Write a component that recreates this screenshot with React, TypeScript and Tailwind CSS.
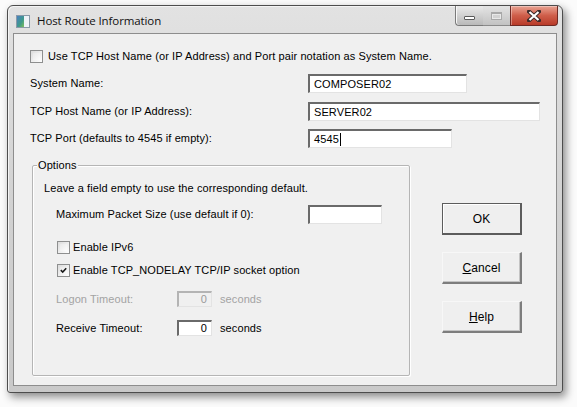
import React from 'react';

const font = "font-['Liberation_Sans',Arial,sans-serif]";

const CheckBox: React.FC<{ checked?: boolean }> = ({ checked }) => (
  <div className="w-[13px] h-[13px] shrink-0 border border-[#8e8f8f] bg-gradient-to-br from-[#dcdcdc] to-white p-[2px]">
    <div className="w-full h-full bg-gradient-to-br from-[#e9e9e9] to-[#fcfcfc] flex items-center justify-center">
      {checked && (
        <svg width="9" height="9" viewBox="0 0 9 9">
          <path d="M1 4 L3.5 6.5 L8 1.5" fill="none" stroke="#1a1a1a" strokeWidth="2" />
        </svg>
      )}
    </div>
  </div>
);

const TextBox: React.FC<{ value?: string; w: string; h?: string; right?: boolean; disabled?: boolean; caret?: boolean }> = ({
  value,
  w,
  h = 'h-[19px]',
  right,
  disabled,
  caret,
}) => (
  <div
    className={`${w} ${h} flex items-center border-t-2 border-l-2 border-b border-r ${
      disabled ? 'border-t-[#b4b4b4] border-l-[#b4b4b4] bg-[#f0f0f0] text-[#9a9a9a]' : 'border-t-[#6a6a6a] border-l-[#6a6a6a] bg-white text-black'
    } border-b-[#e3e3e3] border-r-[#e3e3e3] ${right ? 'justify-end pr-[4px]' : 'pl-[4px]'}`}
  >
    <span className="leading-none">{value}</span>
    {caret && <span className="w-px h-[13px] bg-black ml-px" />}
  </div>
);

const Button: React.FC<{ isDefault?: boolean; children: React.ReactNode }> = ({ isDefault, children }) => (
  <div
    className={`w-[80px] h-[32px] flex items-center justify-center text-black ${
      isDefault
        ? 'border border-[#5c5c5c] border-b-2 border-r-2 shadow-[inset_1px_1px_0_#ffffff]'
        : 'border border-t-[#f7f7f7] border-l-[#f7f7f7] border-b-2 border-r-2 border-b-[#7d7d7d] border-r-[#7d7d7d] shadow-[inset_-1px_-1px_0_#c4c4c4]'
    } bg-[#efefef] text-[12px]`}
  >
    {children}
  </div>
);

const App: React.FC = () => {
  return (
    <div className={`w-[577px] h-[407px] bg-[#fbfbfb] overflow-hidden pt-[5px] pl-[7px] ${font}`}>
      <div className="w-[556px] h-[388px] rounded-t-[6px] rounded-b-[3px] border border-[#4d4d4d] bg-gradient-to-b from-[#e2e2e2] via-[#d2d2d2] to-[#c9c9c9] shadow-[3px_4px_9px_rgba(0,0,0,0.45),inset_1px_1px_0_#f4f4f4] flex flex-col">
        {/* title bar */}
        <div className="h-[27px] flex items-start">
          <svg className="ml-[8px] mt-[9px]" width="14" height="13" viewBox="0 0 14 13">
            <defs>
              <linearGradient id="appIcon" x1="0" y1="0" x2="1" y2="1">
                <stop offset="0" stopColor="#4a7fc0" />
                <stop offset="0.6" stopColor="#3e9a8a" />
                <stop offset="1" stopColor="#7fc05a" />
              </linearGradient>
            </defs>
            <rect x="0.5" y="0.5" width="13" height="12" fill="#ffffff" stroke="#8a9aa8" />
            <rect x="1" y="1" width="7" height="11" fill="url(#appIcon)" />
            <rect x="8" y="1" width="5" height="11" fill="#eef3f8" />
          </svg>
          <span className="ml-[7px] mt-[8px] text-[11.5px] leading-[14px] text-[#101010] font-['Open_Sans',sans-serif] tracking-[-0.1px]">
            Host Route Information
          </span>
          <div className="ml-auto mr-[4px] flex h-[20px]">
            <div className="w-[28px] h-full border border-[#7a7a7a] border-t-0 border-r-0 rounded-bl-[4px] bg-gradient-to-b from-[#eaeaea] to-[#b9b9b9] flex items-center justify-center shadow-[inset_1px_0_0_#f8f8f8]">
              <div className="w-[11px] h-[4px] mt-[5px] bg-white border border-[#5a5a5a] rounded-[1px]" />
            </div>
            <div className="w-[27px] h-full border-b border-[#8a8a8a] bg-gradient-to-b from-[#e4e4e4] to-[#c2c2c2] flex items-center justify-center">
              <div className="w-[11px] h-[8px] border border-[#a8a8a8] border-t-2 bg-[#d2d2d2] shadow-[inset_0_0_0_1px_#e8e8e8]" />
            </div>
            <div className="w-[48px] h-full border border-[#6e2a24] border-t-0 rounded-br-[4px] bg-gradient-to-b from-[#e8a393] via-[#cf5e4a] to-[#b83a28] flex items-center justify-center shadow-[inset_1px_1px_0_rgba(255,255,255,0.35)]">
              <svg width="14" height="12" viewBox="0 0 14 12">
                <path d="M2 1.5 L12 10.5 M12 1.5 L2 10.5" stroke="#3a2a2a" strokeWidth="4" strokeLinecap="square" />
                <path d="M2.5 2 L11.5 10 M11.5 2 L2.5 10" stroke="#ffffff" strokeWidth="2.2" />
              </svg>
            </div>
          </div>
        </div>

        {/* client area */}
        <div className="ml-[5px] mr-[5px] h-[353px] border border-[#8d8d8d] bg-[#f0f0f0] text-[11px] tracking-[0.1px] text-black pl-[16px] pt-[15px]">
          <div className="h-[14px] flex items-center">
            <CheckBox />
            <span className="ml-[5px]">Use TCP Host Name (or IP Address) and Port pair notation as System Name.</span>
          </div>

          <div className="mt-[11px] flex items-center">
            <span className="w-[278px]">System Name:</span>
            <TextBox w="w-[159px]" value="COMPOSER02" />
          </div>
          <div className="mt-[9px] flex items-center">
            <span className="w-[278px]">TCP Host Name (or IP Address):</span>
            <TextBox w="w-[232px]" value="SERVER02" />
          </div>
          <div className="mt-[8px] flex items-center">
            <span className="w-[278px]">TCP Port (defaults to 4545 if empty):</span>
            <TextBox w="w-[144px]" value="4545" caret />
          </div>

          <div className="mt-[17px] flex items-start">
            {/* Options group */}
            <div className="relative ml-[2px] w-[378px] h-[211px] border border-[#b5b5b5] rounded-[2px] shadow-[inset_1px_1px_0_#ffffff,1px_1px_0_#ffffff] pl-[11px] pt-[15px]">
              <span className="absolute -top-[8px] left-[4px] px-[1px] bg-[#f0f0f0] leading-[14px]">Options</span>
              <div className="leading-[14px]">Leave a field empty to use the corresponding default.</div>

              <div className="ml-[12px] mt-[10px] flex items-center">
                <span className="w-[252px]">Maximum Packet Size (use default if 0):</span>
                <TextBox w="w-[74px]" />
              </div>

              <div className="ml-[13px] mt-[16px] h-[14px] flex items-center">
                <CheckBox />
                <span className="ml-[3px]">Enable IPv6</span>
              </div>
              <div className="ml-[13px] mt-[9px] h-[14px] flex items-center">
                <CheckBox checked />
                <span className="ml-[3px]">Enable TCP_NODELAY TCP/IP socket option</span>
              </div>

              <div className="ml-[12px] mt-[14px] flex items-center text-[#a3a3a3]">
                <span className="w-[121px]">Logon Timeout:</span>
                <TextBox w="w-[35px]" h="h-[16px]" value="0" right disabled />
                <span className="ml-[8px]">seconds</span>
              </div>
              <div className="ml-[12px] mt-[12px] flex items-center">
                <span className="w-[121px]">Receive Timeout:</span>
                <TextBox w="w-[35px]" h="h-[16px]" value="0" right />
                <span className="ml-[8px]">seconds</span>
              </div>
            </div>

            {/* dialog buttons */}
            <div className="ml-[32px] mt-[38px] flex flex-col gap-[17px]">
              <Button isDefault>OK</Button>
              <Button>
                <span>
                  <span className="underline">C</span>ancel
                </span>
              </Button>
              <Button>
                <span>
                  <span className="underline">H</span>elp
                </span>
              </Button>
            </div>
          </div>
        </div>
      </div>
    </div>
  );
};

export default App;
